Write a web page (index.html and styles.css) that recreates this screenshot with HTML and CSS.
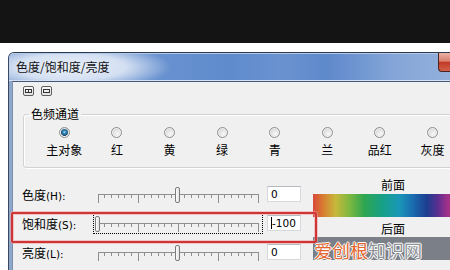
FILE: index.html
```html
<!DOCTYPE html>
<html>
<head>
<meta charset="utf-8">
<link rel="stylesheet" href="styles.css">
</head>
<body>
<div class="page">
  <div class="topband"></div>
  <div class="window">
    <div class="titlebar">
      <span class="title">色度/饱和度/亮度</span>
      <span class="close"></span>
    </div>
    <div class="frame">
      <div class="client">
        <div class="toolbtns">
          <span class="tbtn"><svg width="9" height="8" viewBox="0 0 9 8"><rect x="1.5" y="2.5" width="6" height="3" fill="none" stroke="#333"/><path d="M4.5 2.5V5.5" stroke="#333"/></svg></span>
          <span class="tbtn"><svg width="9" height="8" viewBox="0 0 9 8"><rect x="1.5" y="2.5" width="6" height="3" fill="none" stroke="#333"/></svg></span>
        </div>
        <fieldset class="group">
          <legend>色频通道</legend>
          <div class="radios">
            <div class="opt"><span class="rb on"></span><span class="otext">主对象</span></div>
            <div class="opt"><span class="rb"></span><span class="otext">红</span></div>
            <div class="opt"><span class="rb"></span><span class="otext">黄</span></div>
            <div class="opt"><span class="rb"></span><span class="otext">绿</span></div>
            <div class="opt"><span class="rb"></span><span class="otext">青</span></div>
            <div class="opt"><span class="rb"></span><span class="otext">兰</span></div>
            <div class="opt"><span class="rb"></span><span class="otext">品红</span></div>
            <div class="opt"><span class="rb"></span><span class="otext">灰度</span></div>
          </div>
        </fieldset>
        <div class="adjust">
          <div class="rows">
            <div class="row">
              <span class="lbl">色度<span class="lat">(H):</span></span>
              <div class="slider">
                <svg class="ticks" width="170" height="22" viewBox="0 0 170 22"><path d="M5 11.5H166M5.5 11.5V20M11.5 11.5V15M18.5 11.5V15M25.5 11.5V15M31.5 11.5V15M38.5 11.5V15M45.5 11.5V20M51.5 11.5V15M58.5 11.5V15M65.5 11.5V15M71.5 11.5V15M78.5 11.5V15M85.5 11.5V20M91.5 11.5V15M98.5 11.5V15M105.5 11.5V15M111.5 11.5V15M118.5 11.5V15M125.5 11.5V20M131.5 11.5V15M138.5 11.5V15M145.5 11.5V15M151.5 11.5V15M158.5 11.5V15M165.5 11.5V20" stroke="#8f8f8f" fill="none"/></svg>
                <span class="thumb" style="left:82px"></span>
              </div>
              <span class="num">0</span>
            </div>
            <div class="row">
              <span class="lbl">饱和度<span class="lat">(S):</span></span>
              <div class="slider focus">
                <svg class="ticks" width="170" height="22" viewBox="0 0 170 22"><path d="M5 11.5H166M5.5 11.5V20M11.5 11.5V15M18.5 11.5V15M25.5 11.5V15M31.5 11.5V15M38.5 11.5V15M45.5 11.5V20M51.5 11.5V15M58.5 11.5V15M65.5 11.5V15M71.5 11.5V15M78.5 11.5V15M85.5 11.5V20M91.5 11.5V15M98.5 11.5V15M105.5 11.5V15M111.5 11.5V15M118.5 11.5V15M125.5 11.5V20M131.5 11.5V15M138.5 11.5V15M145.5 11.5V15M151.5 11.5V15M158.5 11.5V15M165.5 11.5V20" stroke="#8f8f8f" fill="none"/></svg>
                <span class="thumb" style="left:2px"></span>
              </div>
              <span class="num"><span class="caret"></span>-100</span>
            </div>
            <div class="row">
              <span class="lbl">亮度<span class="lat">(L):</span></span>
              <div class="slider">
                <svg class="ticks" width="170" height="22" viewBox="0 0 170 22"><path d="M5 11.5H166M5.5 11.5V20M11.5 11.5V15M18.5 11.5V15M25.5 11.5V15M31.5 11.5V15M38.5 11.5V15M45.5 11.5V20M51.5 11.5V15M58.5 11.5V15M65.5 11.5V15M71.5 11.5V15M78.5 11.5V15M85.5 11.5V20M91.5 11.5V15M98.5 11.5V15M105.5 11.5V15M111.5 11.5V15M118.5 11.5V15M125.5 11.5V20M131.5 11.5V15M138.5 11.5V15M145.5 11.5V15M151.5 11.5V15M158.5 11.5V15M165.5 11.5V20" stroke="#8f8f8f" fill="none"/></svg>
                <span class="thumb" style="left:82px"></span>
              </div>
              <span class="num">0</span>
            </div>
          </div>
          <div class="preview">
            <div class="plabel">前面</div>
            <div class="bar rainbow"></div>
            <div class="plabel after">后面</div>
            <div class="bar graybar"></div>
          </div>
        </div>
      </div>
    </div>
  </div>
  <div class="highlight"></div>
  <div class="watermark"><span class="wm1">爱创根</span><span class="wm2">知识网</span></div>
</div>
</body>
</html>
```

FILE: styles.css
```css
* { box-sizing: border-box; }
html, body { margin: 0; padding: 0; }
body {
  width: 450px;
  height: 270px;
  overflow: hidden;
  background: #fff;
  font-family: "Noto Sans CJK SC", "Noto Sans", sans-serif;
  font-size: 12px;
  color: #000;
}
.page {
  position: relative;
  width: 450px;
  height: 270px;
  overflow: hidden;
  background: #fff;
}
.topband { height: 43px; background: #141414; }

.window {
  margin-top: 9px;
  margin-left: 8px;
  width: 442px;
  height: 220px;
  border-top: 1px solid #2c3a50;
  border-left: 1px solid #3a4963;
  border-top-left-radius: 6px;
  overflow: hidden;
  background: #a3b8d8;
  display: flex;
  flex-direction: column;
}
.titlebar {
  flex: none;
  height: 28px;
  display: flex;
  align-items: flex-start;
  background:
    radial-gradient(ellipse 100px 24px at 62px 14px, rgba(236,241,249,0.97) 0%, rgba(222,231,245,0.9) 55%, rgba(222,231,245,0) 100%),
    linear-gradient(to right, #7fa2d6 0%, #6a93d0 30%, #5f8bcd 50%, #6a92d0 62%, #5e89cb 72%, #86a6d8 88%, #93b0dc 100%);
  box-shadow: inset 0 1px 0 #b4c9e8, inset 0 -1px 0 #d6e0f0;
}
.title {
  padding-left: 7px;
  line-height: 27px;
  font-size: 12px;
  color: #111;
}
.close {
  margin-left: auto;
  width: 12px;
  height: 19px;
  border-left: 1px solid #4a2420;
  border-bottom: 1px solid #4a2420;
  border-bottom-left-radius: 4px;
  background: linear-gradient(#e9b2a6 0%, #d9806e 45%, #c23a26 52%, #d2604a 100%);
}
.frame {
  flex: 1;
  padding-left: 3px;
  background: linear-gradient(to right, #8fa6cb, #b7c8e2);
}
.client {
  height: 100%;
  background: #f0f0f0;
  border-left: 1px solid #7d90b0;
  border-top: 1px solid #46587a;
  padding: 4px 0 0 10px;
}
.toolbtns { display: flex; gap: 7px; height: 10px; }
.tbtn {
  width: 11px;
  height: 10px;
  border: 1px solid #5e5e5e;
  border-radius: 2px;
  background: linear-gradient(#fbfbfb, #e2e2e2);
  display: flex;
  align-items: center;
  justify-content: center;
}
.tbtn svg { display: block; }

.group {
  margin: 11px 0 0 0;
  width: 440px;
  padding: 0 0 9px 5px;
  border: 1px solid #d2d2d2;
  border-radius: 3px;
  box-shadow: inset 1px 1px 0 #fff, 1px 1px 0 #fff;
}
.group legend {
  padding: 0 2px;
  line-height: 14px;
  font-size: 12px;
}
.radios {
  display: grid;
  grid-template-columns: repeat(8, 52.6px);
  margin-left: 9px;
  padding-top: 6px;
}
.opt {
  display: flex;
  flex-direction: column;
  align-items: center;
  gap: 4px;
}
.rb {
  width: 11px;
  height: 11px;
  border-radius: 50%;
  border: 1px solid #8e8f8f;
  background: radial-gradient(circle at 60% 65%, #f8f8f8 0%, #e4e4e4 45%, #bdbdbd 100%);
  box-shadow: inset 0 0 0 1px #f2f2f2;
}
.rb.on {
  background: radial-gradient(circle at 50% 45%, #9fd8f4 0, #3a8cbc 1.5px, #1a5a86 3px, #123e60 3.6px, #e6e6e6 4.2px, #f6f6f6 100%);
}
.otext { line-height: 16px; }

.adjust {
  display: flex;
  margin-top: 10px;
  margin-left: -1px;
}
.rows {
  display: flex;
  flex-direction: column;
  gap: 7px;
  padding-top: 5px;
}
.row {
  display: flex;
  align-items: center;
  height: 22px;
}
.lbl { width: 71px; font-size: 12px; white-space: nowrap; }
.lat { font-family: "DejaVu Sans", sans-serif; font-size: 10.5px; }
.slider {
  position: relative;
  width: 170px;
  height: 22px;
}
.slider.focus { outline: 1px dotted #000; outline-offset: -1px; }
.ticks { display: block; }
.thumb {
  position: absolute;
  top: 4px;
  width: 5px;
  height: 16px;
  border: 1px solid #7c7c7c;
  border-radius: 2px;
  background: linear-gradient(to right, #fdfdfd, #e2e2e2);
}
.num {
  margin-left: 4px;
  width: 34px;
  height: 16px;
  background: #fff;
  border: 1px solid #d6d9de;
  border-top-color: #b5b8be;
  font-family: "DejaVu Sans", sans-serif;
  font-size: 10.5px;
  line-height: 14px;
  padding-left: 3px;
  display: flex;
  align-items: center;
}
.caret {
  width: 1px;
  height: 12px;
  background: #000;
  margin-right: 0;
}

.preview {
  flex: none;
  margin-left: 12px;
  width: 160px;
}
.plabel { text-align: center; line-height: 14px; height: 14px; }
.plabel.after { margin-top: 5px; }
.bar { height: 23px; }
.rainbow {
  margin-top: 2px;
  background: linear-gradient(to right, #d8483a 0%, #d87a30 6%, #c8b83c 14%, #7cb840 23%, #2ea650 32%, #16a08a 44%, #1a96b8 54%, #1a6eb0 62%, #1c3e90 71%, #5a2e90 78%, #a0308a 84%, #d04070 100%);
}
.graybar { margin-top: 1px; background: #7b7f87; }

.highlight {
  position: absolute;
  left: 11px;
  top: 212px;
  width: 306px;
  height: 31px;
  border: 2px solid #cf3535;
  border-radius: 2px;
  box-shadow: 0 0 0 1px rgba(240,160,160,0.55), inset 0 0 0 1px rgba(240,160,160,0.55);
}
.watermark {
  position: absolute;
  left: 314px;
  top: 240px;
  font-size: 18px;
  line-height: 20px;
  white-space: nowrap;
}
.wm1, .wm2 {
  text-shadow: 1px 0 0 #fff, -1px 0 0 #fff, 0 1px 0 #fff, 0 -1px 0 #fff;
}
.wm1 { color: #e4652e; }
.wm2 { color: #8f9299; }
```
